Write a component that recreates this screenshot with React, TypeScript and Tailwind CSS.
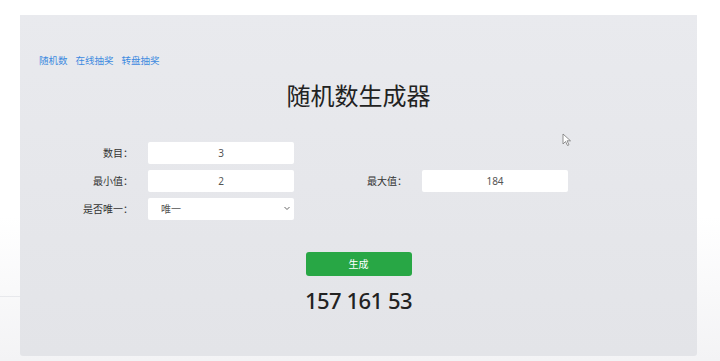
import React from 'react';

const font = { fontFamily: '"Noto Sans", "Noto Sans CJK SC", sans-serif' };

const Field: React.FC<{ label: string; value: string; labelW: string }> = ({ label, value, labelW }) => (
  <div className="flex items-center">
    <label className={`${labelW} shrink-0 pr-[15px] text-right text-[10px] text-[#333]`}>{label}</label>
    <input
      readOnly
      value={value}
      className="h-[22px] w-[146px] rounded-[2px] bg-white text-center text-[10px] text-[#555] outline-none"
    />
  </div>
);

export default function App() {
  return (
    <div className="relative h-[361px] w-[720px] overflow-hidden bg-gradient-to-b from-white from-60% to-[#f3f3f5]" style={font}>
      <div className="absolute left-0 top-[296px] h-px w-[612px] bg-[#dcdde2]/60" />
      <div className="absolute left-[612px] top-[292px] h-[10px] w-[10px] rounded-full border border-[#d8d9de]/70" />

      <div className="relative ml-[20px] mt-[15px] h-[341px] w-[677px] rounded-b-[3px] bg-gradient-to-b from-[#e9eaee] to-[#e3e4e8] px-[19px] pt-[38px]">
        <nav className="flex gap-[8px] text-[9.5px] leading-[16px] text-[#3d8ae0]">
          <a>随机数</a>
          <a>在线抽奖</a>
          <a>转盘抽奖</a>
        </nav>

        <h1 className="mt-[10px] text-center text-[24px] font-normal leading-[34px] text-[#222]">随机数生成器</h1>

        <div className="mt-[29px] flex flex-col gap-[6px]">
          <Field label="数目：" value="3" labelW="w-[109px]" />
          <div className="flex">
            <Field label="最小值：" value="2" labelW="w-[109px]" />
            <Field label="最大值：" value="184" labelW="w-[128px]" />
          </div>
          <div className="flex items-center">
            <label className="w-[109px] shrink-0 pr-[15px] text-right text-[10px] text-[#333]">是否唯一：</label>
            <div className="relative flex h-[22px] w-[146px] items-center rounded-[2px] bg-white pl-[13px] text-[10px] text-[#555]">
              唯一
              <svg className="absolute right-[4px] top-[8px]" width="6" height="5" viewBox="0 0 6 5" fill="none" stroke="#666" strokeWidth="1">
                <path d="M0.5 1l2.5 2.5L5.5 1" />
              </svg>
            </div>
          </div>
        </div>

        <div className="mt-[32px] flex flex-col items-center">
          <button className="h-[24px] w-[106px] rounded-[3px] bg-[#28a745] text-[10px] text-white">生成</button>
          <div className="mt-[9px] text-[22px] font-medium leading-[30px] tracking-[-0.5px] text-[#222]">157 161 53</div>
        </div>

        <svg className="absolute left-[542px] top-[118px]" width="10" height="14" viewBox="0 0 10 14">
          <path d="M1 1v10l2.5-2.5 2 4 1.5-.7-2-4H8.5z" fill="#fff" stroke="#777" strokeWidth="0.8" />
        </svg>
      </div>
    </div>
  );
}
